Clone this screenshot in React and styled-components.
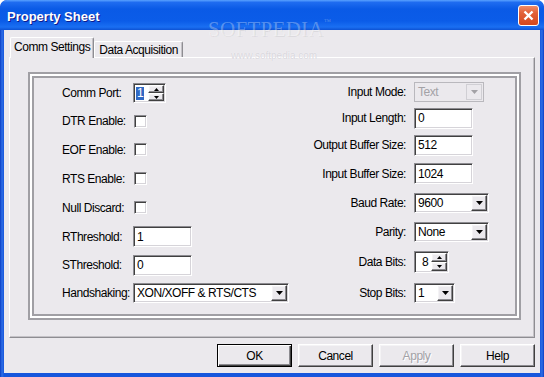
import styled, { createGlobalStyle, css } from "styled-components";

const FACE = "#ebe9ed";

const GlobalStyle = createGlobalStyle`
  html, body {
    margin: 0;
    padding: 0;
    background: #fff;
  }
  body {
    font-family: "Liberation Sans", Arial, sans-serif;
  }
`;

const sunken = css`
  box-sizing: border-box;
  border: 1px solid;
  border-color: #8c8b90 #fff #fff #8c8b90;
  box-shadow: inset 1px 1px #404040, inset -1px -1px #d6d4d9;
`;

const raised = css`
  box-sizing: border-box;
  background: ${FACE};
  border: 1px solid;
  border-color: #fff #404040 #404040 #fff;
  box-shadow: inset -1px -1px #8c8b90, inset 1px 1px #f4f3f5;
`;

const Window = styled.div`
  position: relative;
  width: 544px;
  height: 377px;
  display: flex;
  flex-direction: column;
  background: linear-gradient(90deg, #0a3dc4 0, #2e6ee6 2px, #1656dc 4px, #1656dc 540px, #2e6ee6 542px, #0a3dc4 100%);
  border-radius: 7px 7px 0 0;
  overflow: hidden;
`;

const TitleBar = styled.div`
  flex: none;
  height: 30px;
  display: flex;
  align-items: center;
  justify-content: space-between;
  padding: 0 5px 0 7px;
  background: linear-gradient(180deg, #5aa2ff 0%, #1f6cf0 8%, #0a5ae6 30%, #0b5ce8 70%, #1a6ff2 90%, #0d52d4 100%);
  border-radius: 7px 7px 0 0;
`;

const Title = styled.span`
  padding-top: 2px;
  font-family: "Liberation Sans", Arial, sans-serif;
  font-weight: bold;
  font-size: 13px;
  color: #fff;
  text-shadow: 1px 1px #0f1a8c;
`;

const CloseButton = styled.div`
  width: 21px;
  height: 21px;
  box-sizing: border-box;
  border: 1px solid #fff;
  border-radius: 3px;
  background: linear-gradient(180deg, #f08c68 0%, #e2623a 35%, #d4471d 100%);
  display: flex;
  align-items: center;
  justify-content: center;
`;

const Client = styled.div`
  flex: 1;
  margin: 0 4px 4px;
  padding: 7px 5px 6px;
  display: flex;
  flex-direction: column;
  background: ${FACE};
  font-family: "Liberation Sans", Arial, sans-serif;
  font-size: 12px;
  letter-spacing: -0.45px;
  color: #000;
`;

const TabStrip = styled.div`
  flex: none;
  height: 20px;
  display: flex;
  align-items: flex-end;
  padding-left: 1px;
  position: relative;
  z-index: 1;
`;

const Tab = styled.div`
  box-sizing: border-box;
  height: ${(p) => (p.$active ? 21 : 16)}px;
  margin-bottom: ${(p) => (p.$active ? -1 : 0)}px;
  padding: 0 ${(p) => (p.$active ? 3 : 4)}px ${(p) => (p.$active ? 2 : 0)}px;
  display: flex;
  align-items: center;
  background: ${FACE};
  border-top: 1px solid #fff;
  border-left: 1px solid #fff;
  border-right: 1px solid #8e8d92;
  box-shadow: inset -1px 0 #c4c2c7;
  border-radius: 2px 2px 0 0;
`;

const Panel = styled.div`
  flex: 1;
  display: flex;
  border-top: 1px solid #fff;
  border-left: 1px solid #fff;
  border-right: 1px solid #8e8d92;
  border-bottom: 1px solid #8e8d92;
  box-shadow: inset -1px -1px #c4c2c7;
  padding: 14px 13px 17px 18px;
`;

const GroupBox = styled.div`
  flex: 1;
  display: flex;
  justify-content: space-between;
  align-items: flex-start;
  border: 2px solid #a09fa4;
  box-shadow: inset 0 0 0 2px #fff, inset 0 0 0 4px #a09fa4;
  padding: 5px 30px 0 32px;
`;

const FieldColumn = styled.div`
  display: grid;
  grid-template-columns: ${(p) => p.$cols};
  grid-template-rows: ${(p) => p.$rows};
  column-gap: ${(p) => p.$gap || 0}px;
  align-items: center;
`;

const Label = styled.span`
  justify-self: ${(p) => (p.$right ? "end" : "start")};
  white-space: nowrap;
`;

const Edit = styled.div`
  ${sunken}
  width: ${(p) => p.$w}px;
  height: 21px;
  padding: 0 3px;
  display: flex;
  align-items: center;
  background: #fff;
`;

const Combo = styled.div`
  ${sunken}
  width: ${(p) => p.$w}px;
  height: ${(p) => p.$h || 21}px;
  padding: 1px 1px 1px 3px;
  display: flex;
  align-items: stretch;
  background: ${(p) => (p.$disabled ? FACE : "#fff")};
  color: ${(p) => (p.$disabled ? "#a3a2a6" : "#000")};
  ${(p) =>
    p.$disabled &&
    css`
      border-color: #b9b8bd;
      box-shadow: none;
    `}
`;

const ComboText = styled.span`
  flex: 1;
  display: flex;
  align-items: center;
  white-space: nowrap;
`;

const DropButton = styled.div`
  ${raised}
  flex: none;
  width: 16px;
  display: flex;
  align-items: center;
  justify-content: center;
  ${(p) =>
    p.$disabled &&
    css`
      border-color: #d0cfd4;
      box-shadow: none;
    `}
`;

const Spinner = styled.div`
  ${sunken}
  width: ${(p) => p.$w}px;
  height: ${(p) => p.$h}px;
  padding: 1px 1px 1px ${(p) => p.$pad}px;
  display: flex;
  align-items: stretch;
  background: #fff;
`;

const SpinValue = styled.div`
  flex: 1;
  display: flex;
  align-items: center;
`;

const Selected = styled.span`
  background: #316ac5;
  color: #fff;
  padding: 0 1px;
  line-height: 13px;
`;

const SpinButtons = styled.div`
  flex: none;
  width: 16px;
  display: flex;
  flex-direction: column;
`;

const SpinButton = styled.div`
  ${raised}
  flex: 1;
  display: flex;
  align-items: center;
  justify-content: center;
`;

const CheckBox = styled.div`
  ${sunken}
  width: 13px;
  height: 13px;
  margin-left: 1px;
  background: #fff;
`;

const ButtonRow = styled.div`
  flex: none;
  display: flex;
  justify-content: flex-end;
  gap: 6px;
  margin-top: 6px;
`;

const PushButton = styled.div`
  ${raised}
  width: 75px;
  height: 23px;
  display: flex;
  align-items: center;
  justify-content: center;
  color: ${(p) => (p.$disabled ? "#a3a2a6" : "#000")};
  text-shadow: ${(p) => (p.$disabled ? "1px 1px #fff" : "none")};
  ${(p) =>
    p.$default &&
    css`
      border: 1px solid #000;
      box-shadow: inset 1px 1px #fff, inset -1px -1px #404040, inset -2px -2px #8c8b90;
    `}
`;

const Watermark = styled.div`
  position: absolute;
  left: 208px;
  top: 17px;
  font-family: "Liberation Serif", "Times New Roman", serif;
  font-size: 21px;
  letter-spacing: 0.3px;
  color: rgba(255, 255, 255, 0.3);
  text-shadow: 1px 1px rgba(0, 0, 0, 0.06);
  pointer-events: none;
  sup {
    font-size: 7px;
    vertical-align: 12px;
  }
`;

const WatermarkUrl = styled.div`
  position: absolute;
  left: 231px;
  top: 50px;
  font-family: "Liberation Sans", Arial, sans-serif;
  font-size: 10px;
  color: #d9d7dd;
  text-shadow: 0 0 1px #fff;
  pointer-events: none;
`;

const Arrow = ({ w = 7, h = 4, color = "#000", up = false }) => (
  <svg width={w} height={h} viewBox={`0 0 ${w} ${h}`}>
    <polygon
      points={up ? `0,${h} ${w},${h} ${w / 2},0` : `0,0 ${w},0 ${w / 2},${h}`}
      fill={color}
    />
  </svg>
);

const Drop = ({ disabled }) => (
  <DropButton $disabled={disabled}>
    <Arrow color={disabled ? "#a3a2a6" : "#000"} />
  </DropButton>
);

const Spin = ({ w, h, pad, children }) => (
  <Spinner $w={w} $h={h} $pad={pad}>
    <SpinValue>{children}</SpinValue>
    <SpinButtons>
      <SpinButton>
        <Arrow w={5} h={3} up />
      </SpinButton>
      <SpinButton>
        <Arrow w={5} h={3} />
      </SpinButton>
    </SpinButtons>
  </Spinner>
);

const App = () => {
  return (
    <Window>
      <GlobalStyle />
      <TitleBar>
        <Title>Property Sheet</Title>
        <CloseButton>
          <svg width="11" height="11" viewBox="0 0 11 11">
            <path d="M1.5 1.5 L9.5 9.5 M9.5 1.5 L1.5 9.5" stroke="#fff" strokeWidth="2.4" />
          </svg>
        </CloseButton>
      </TitleBar>
      <Client>
        <TabStrip>
          <Tab $active>Comm Settings</Tab>
          <Tab>Data Acquisition</Tab>
        </TabStrip>
        <Panel>
          <GroupBox>
            <FieldColumn $cols="71px auto" $rows="28px 28px 29px 29px 29px 29px 28px 28px">
              <Label>Comm Port:</Label>
              <Spin w={33} h={20} pad={2}>
                <Selected>1</Selected>
              </Spin>
              <Label>DTR Enable:</Label>
              <CheckBox />
              <Label>EOF Enable:</Label>
              <CheckBox />
              <Label>RTS Enable:</Label>
              <CheckBox />
              <Label>Null Discard:</Label>
              <CheckBox />
              <Label>RThreshold:</Label>
              <Edit $w={59}>1</Edit>
              <Label>SThreshold:</Label>
              <Edit $w={59}>0</Edit>
              <Label>Handshaking:</Label>
              <Combo $w={156} $h={20}>
                <ComboText>XON/XOFF &amp; RTS/CTS</ComboText>
                <Drop />
              </Combo>
            </FieldColumn>

            <FieldColumn $cols="auto 75px" $gap={8} $rows="26px 26px 28px 29px 29px 30px 30px 31px">
              <Label $right>Input Mode:</Label>
              <Combo $w={70} $h={20} $disabled>
                <ComboText>Text</ComboText>
                <Drop disabled />
              </Combo>
              <Label $right>Input Length:</Label>
              <Edit $w={59}>0</Edit>
              <Label $right>Output Buffer Size:</Label>
              <Edit $w={59}>512</Edit>
              <Label $right>Input Buffer Size:</Label>
              <Edit $w={59}>1024</Edit>
              <Label $right>Baud Rate:</Label>
              <Combo $w={75} $h={20}>
                <ComboText>9600</ComboText>
                <Drop />
              </Combo>
              <Label $right>Parity:</Label>
              <Combo $w={75} $h={20}>
                <ComboText>None</ComboText>
                <Drop />
              </Combo>
              <Label $right>Data Bits:</Label>
              <Spin w={35} h={22} pad={7}>
                8
              </Spin>
              <Label $right>Stop Bits:</Label>
              <Combo $w={41} $h={20}>
                <ComboText>1</ComboText>
                <Drop />
              </Combo>
            </FieldColumn>
          </GroupBox>
        </Panel>
        <ButtonRow>
          <PushButton $default>OK</PushButton>
          <PushButton>Cancel</PushButton>
          <PushButton $disabled>Apply</PushButton>
          <PushButton>Help</PushButton>
        </ButtonRow>
      </Client>
      <Watermark>
        SOFTPEDIA<sup>™</sup>
      </Watermark>
      <WatermarkUrl>www.softpedia.com</WatermarkUrl>
    </Window>
  );
};

export default App;
